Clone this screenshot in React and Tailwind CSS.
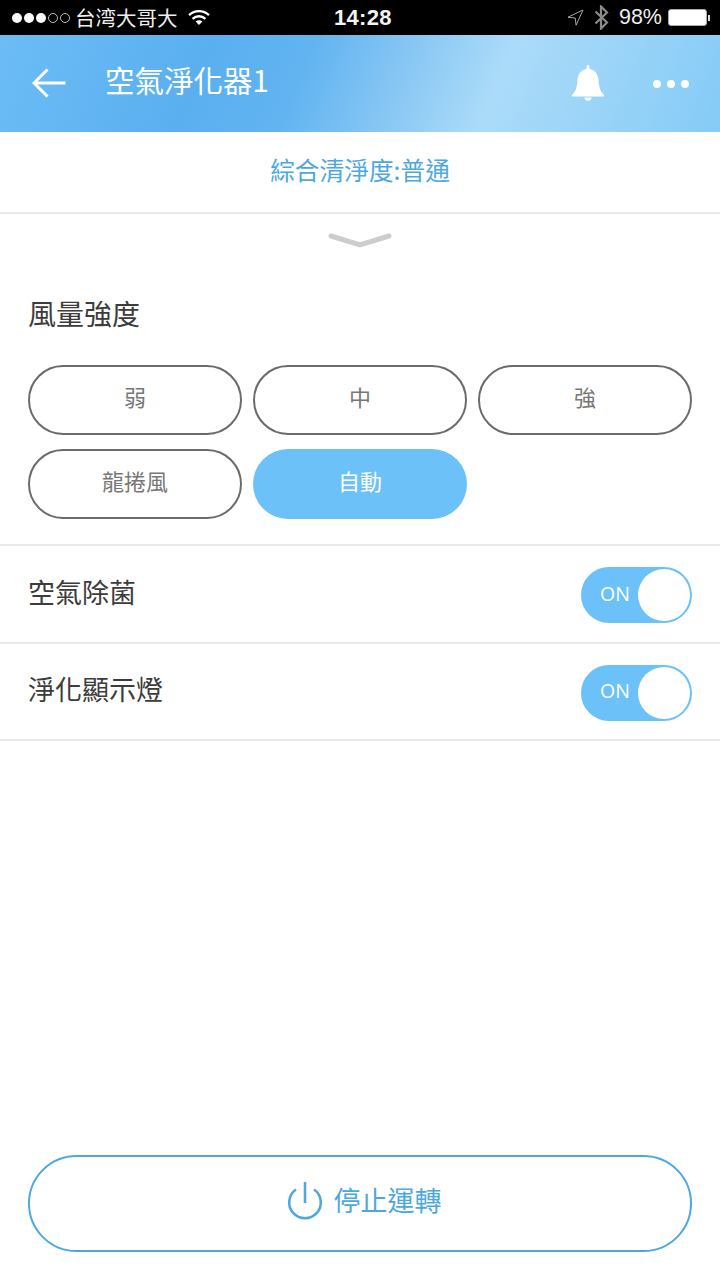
const CJK = "font-['Noto_Sans_CJK_TC','Noto_Sans',sans-serif]";

function Pill({ label, active }) {
  return (
    <div
      className={`flex h-[70px] items-center justify-center rounded-full pb-[9px] text-[22px] leading-none ${
        active ? "bg-[#6cc1f8] text-white" : "border-2 border-[#6b6b6b] text-[#777777]"
      }`}
    >
      {label}
    </div>
  );
}

function ToggleRow({ label, height }) {
  return (
    <div className={`flex ${height} items-center justify-between border-b-2 border-[#e8e8e8] pl-[28px] pr-[28px]`}>
      <span className="pb-[6px] text-[27px] leading-none text-[#3c3c3c]">{label}</span>
      <div className="mt-[2px] flex h-[56px] w-[111px] items-center justify-between rounded-full border-2 border-[#6cc1f8] bg-[#6cc1f8]">
        <span className="pb-[3px] pl-[17px] font-['Open_Sans',sans-serif] text-[19.5px] leading-none text-white">ON</span>
        <span className="h-[52px] w-[52px] rounded-full bg-white" />
      </div>
    </div>
  );
}

export default function App() {
  return (
    <div className={`flex h-[1280px] w-[720px] flex-col overflow-hidden bg-white ${CJK}`}>
      {/* status bar */}
      <div className="flex h-[35px] items-center justify-between bg-black pl-[12px] pr-[10px] text-white">
        <div className="flex w-[300px] items-center">
          <div className="flex items-center gap-[2px]">
            <span className="h-[10px] w-[10px] rounded-full bg-white" />
            <span className="h-[10px] w-[10px] rounded-full bg-white" />
            <span className="h-[10px] w-[10px] rounded-full bg-white" />
            <span className="h-[10px] w-[10px] rounded-full border border-[#bbbbbb]" />
            <span className="h-[10px] w-[10px] rounded-full border border-[#bbbbbb]" />
          </div>
          <span className="ml-[5px] text-[20.5px] leading-none text-[#eeeeee]">台湾大哥大</span>
          <svg className="ml-[10px]" width="22" height="17" viewBox="0 0 22 17" fill="none">
            <path d="M1 6.200C6.800 .8 15.200 .8 21 6.200" stroke="white" strokeWidth="2.400" />
            <path d="M4.600 9.800C8.300 6.400 13.700 6.400 17.400 9.800" stroke="white" strokeWidth="2.400" />
            <path d="M7.600 12.600L11 16l3.400-3.400c-2-1.700-4.800-1.700-6.800 0z" fill="white" />
          </svg>
        </div>
        <span className="absolute left-[334px] font-['Liberation_Sans',sans-serif] text-[22px] font-bold leading-none tracking-[0.3px] text-[#f4f4f4]">14:28</span>
        <div className="flex items-center">
          <svg width="17" height="17" viewBox="0 0 17 17" fill="none">
            <path d="M16 1L1 8.200l7.200.8.9 7.200z" stroke="#a8a8a8" strokeWidth="1" strokeLinejoin="round" />
          </svg>
          <svg className="ml-[10px]" width="15" height="25" viewBox="0 0 15 25" fill="none">
            <path d="M1.500 6.500l11.500 11-6 6V1.500l6 6-11.500 11" stroke="#8a8a8a" strokeWidth="2.200" />
          </svg>
          <span className="ml-[10px] pt-[1px] font-['Liberation_Sans',sans-serif] text-[21.5px] leading-none text-[#eeeeee]">98%</span>
          <div className="ml-[6px] flex items-center">
            <div className="h-[17px] w-[39px] rounded-[3px] border border-[#aaaaaa] bg-white" />
            <div className="ml-[1px] h-[6px] w-[2px] bg-[#dddddd]" />
          </div>
        </div>
      </div>

      {/* header */}
      <div className="flex h-[97px] items-center bg-[linear-gradient(112deg,#6cbdf6_0%,#5aafef_28%,#62b4f1_42%,#8ac8f4_56%,#abdbf9_68%,#a0d6f8_78%,#84cbf7_100%)] pl-[32px] pr-[31px]">
        <svg width="34" height="30" viewBox="0 0 34 30" fill="none" className="mb-[1px]">
          <path d="M33.500 15H2M15.500 1.500L2 15l13.500 13.500" stroke="white" strokeWidth="3" />
        </svg>
        <span className="ml-[39px] flex-1 pb-[7px] text-[29.5px] leading-none text-white">空氣淨化器1</span>
        <svg width="32" height="36" viewBox="0 0 32 36" className="mb-[1px]">
          <path
            d="M16 0 C17 0 17.500 .8 17.500 1.800 L17.500 4 C23.500 5 26 9.500 26.500 15 C27 22 28 26 31.700 29.500 C32.300 30.200 32 31.500 31 31.500 L1 31.500 C0 31.500 -.3 30.200 .3 29.500 C4 26 5 22 5.500 15 C6 9.500 8.500 5 14.500 4 L14.500 1.800 C14.500 .8 15 0 16 0 Z M12.500 32.500 L19.500 32.500 C19.500 34.500 18 35.800 16 35.800 C14 35.800 12.500 34.500 12.500 32.500 Z"
            fill="white"
          />
        </svg>
        <div className="ml-[49px] flex items-center gap-[6px]">
          <span className="h-[8px] w-[8px] rounded-full bg-white" />
          <span className="h-[8px] w-[8px] rounded-full bg-white" />
          <span className="h-[8px] w-[8px] rounded-full bg-white" />
        </div>
      </div>

      {/* summary */}
      <div className="flex h-[82px] items-center justify-center border-b-2 border-[#e8e8e8] pb-[6px] text-[24.700px] leading-none text-[#4ea8e0]">
        綜合清淨度:普通
      </div>

      {/* fan section */}
      <div className="flex h-[332px] flex-col border-b-2 border-[#e8e8e8] px-[28px]">
        <svg className="mt-[18px] self-center" width="64" height="16" viewBox="0 0 64 16" fill="none">
          <path d="M3 4l29 9 29-9" stroke="#cccccc" strokeWidth="5" strokeLinecap="round" strokeLinejoin="miter" />
        </svg>
        <div className="mt-[51px] text-[28px] leading-none text-[#3c3c3c]">風量強度</div>
        <div className="mt-[38px] grid grid-cols-3 gap-x-[11px] gap-y-[14px]">
          <Pill label="弱" />
          <Pill label="中" />
          <Pill label="強" />
          <Pill label="龍捲風" />
          <Pill label="自動" active />
        </div>
      </div>

      <ToggleRow label="空氣除菌" height="h-[98px]" />
      <ToggleRow label="淨化顯示燈" height="h-[97px]" />

      {/* stop button */}
      <div className="mt-auto px-[28px] pb-[28px]">
        <div className="flex h-[97px] items-center justify-center rounded-full border-2 border-[#4ea8e0] pl-[8px]">
          <svg width="36" height="40" viewBox="0 0 36 40" fill="none" className="mb-[5px]">
            <path d="M9 8.500A15.800 15.800 0 1 0 27 8.500M18 1V22" stroke="#4ea8e0" strokeWidth="2.600" />
          </svg>
          <span className="mb-[8px] ml-[11px] text-[27px] leading-none text-[#4ea8e0]">停止運轉</span>
        </div>
      </div>
    </div>
  );
}
